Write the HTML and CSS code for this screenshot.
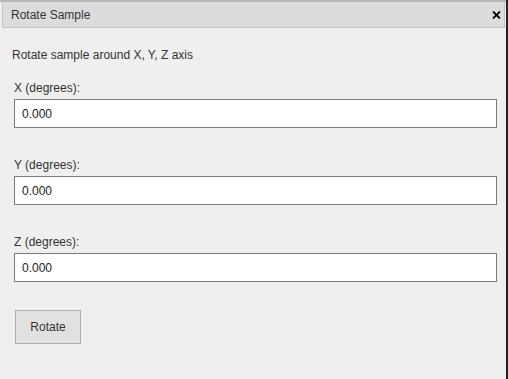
FILE: index.html
```html
<!DOCTYPE html>
<html lang="en">

<head>
    <meta charset="UTF-8">
    <meta name="viewport" content="width=device-width, initial-scale=1.0">
    <title>Rotate Sample</title>
    <link rel="stylesheet" href="styles.css">
</head>

<body>
    <div class="dialog">
        <!-- Title bar with close button -->
        <div class="titlebar">
            <span class="title">Rotate Sample</span>
            <span class="close">
                <svg width="9" height="8" viewBox="0 0 9 8">
                    <path d="M1 0.5 L8 7.5 M8 0.5 L1 7.5" stroke="#000" stroke-width="1.8" fill="none" />
                </svg>
            </span>
        </div>

        <div class="content">
            <p class="description">Rotate sample around X, Y, Z axis</p>

            <div class="form-group">
                <label for="rotX">X (degrees):</label>
                <input type="text" id="rotX" value="0.000">
            </div>

            <div class="form-group">
                <label for="rotY">Y (degrees):</label>
                <input type="text" id="rotY" value="0.000">
            </div>

            <div class="form-group">
                <label for="rotZ">Z (degrees):</label>
                <input type="text" id="rotZ" value="0.000">
            </div>

            <button class="rotate-button">Rotate</button>
        </div>
    </div>
</body>

</html>
```

FILE: styles.css
```css
* {
    margin: 0;
    padding: 0;
    box-sizing: border-box;
    font-family: 'Liberation Sans', Arial, sans-serif;
}

body {
    background: #1f2023;
    width: 508px;
    height: 379px;
    overflow: hidden;
}

.dialog {
    width: 506px;
    height: 379px;
    background: #efefef;
    border-top: 2px solid #b6b6b6;
}

.titlebar {
    display: flex;
    align-items: center;
    justify-content: space-between;
    height: 26px;
    margin: 0 1px 0 2px;
    padding: 0 3px 0 8px;
    background: #dcdcdc;
    border: 1px solid #c3c3c3;
    border-top: none;
}

.title {
    font-size: 12px;
    color: #333;
    line-height: 14px;
}

.close {
    display: flex;
    margin-top: 1px;
}

.content {
    padding: 20px 9px 0 14px;
}

.description {
    font-size: 12px;
    line-height: 14px;
    color: #333;
    margin-left: -2px;
}

.form-group {
    margin-top: 19px;
}

.form-group + .form-group {
    margin-top: 30px;
}

label {
    display: block;
    font-size: 12px;
    line-height: 14px;
    color: #333;
    margin-bottom: 4px;
}

input {
    display: block;
    width: 483px;
    height: 29px;
    padding: 0 7px;
    border: 1px solid #7a7a7a;
    background: #fff;
    font-size: 12px;
    color: #222;
    outline: none;
}

.rotate-button {
    margin-top: 28px;
    margin-left: 1px;
    width: 66px;
    height: 34px;
    background: #e1e1e1;
    border: 1px solid #adadad;
    font-size: 12px;
    color: #333;
    cursor: pointer;
}
```
